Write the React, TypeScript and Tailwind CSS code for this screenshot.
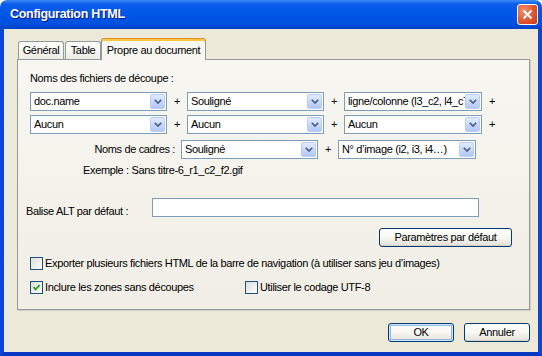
import React from "react";

const Chevron = () => (
  <svg width="8" height="5" viewBox="0 0 8 5" className="block">
    <path d="M0.8 0.8 L4 4 L7.2 0.8" fill="none" stroke="#4D6185" strokeWidth="1.7" />
  </svg>
);

const Combo: React.FC<{ value: string; className: string }> = ({ value, className }) => (
  <div className={`flex h-[19px] shrink-0 items-center border border-[#7F9DB9] bg-white ${className}`}>
    <span className="min-w-0 flex-1 overflow-hidden whitespace-nowrap pl-[3px] leading-[17px]">{value}</span>
    <div className="mr-px flex h-[15px] w-[15px] shrink-0 items-center justify-center rounded-[2px] border border-[#BACDF7] bg-gradient-to-b from-[#E2EBFE] to-[#B2C7F8]">
      <Chevron />
    </div>
  </div>
);

const Plus = () => <span className="w-[20px] shrink-0 text-center leading-[17px]">+</span>;

const Check: React.FC<{ checked?: boolean }> = ({ checked }) => (
  <div className="flex h-[13px] w-[13px] shrink-0 items-center justify-center border border-[#1C5180] bg-gradient-to-br from-[#DCDCD7] to-white">
    {checked && (
      <svg width="9" height="9" viewBox="0 0 9 9">
        <path d="M1.5 4.2 L3.6 6.4 L7.6 2" fill="none" stroke="#21A121" strokeWidth="1.8" />
      </svg>
    )}
  </div>
);

const XPButton: React.FC<{ children: React.ReactNode; className: string; def?: boolean }> = ({ children, className, def }) => (
  <div
    className={`flex h-[19px] items-center justify-center rounded-[3px] border border-[#003C74] bg-gradient-to-b from-white via-[#F8F7F2] to-[#E2E0D5] ${
      def ? "shadow-[inset_0_0_0_1px_#CEE7FF,inset_0_0_0_2px_#94B6EA]" : "shadow-[inset_0_-1px_0_#D6D0C5]"
    } ${className}`}
  >
    {children}
  </div>
);

export default function App() {
  return (
    <div className="flex h-[356px] w-[542px] flex-col bg-white font-['Liberation_Sans',Arial,sans-serif] text-[11px] tracking-[-0.35px] text-black">
      {/* title bar */}
      <div className="flex h-[29px] shrink-0 items-center justify-between rounded-t-[7px] bg-[linear-gradient(to_bottom,#3D8CF6_0%,#0A5DEA_14%,#0056E6_50%,#0051DF_82%,#0041C6_100%)] pl-[10px] pr-[4px]">
        <span className="text-[12.5px] font-bold tracking-[-0.3px] text-white [text-shadow:1px_1px_0_#0A1883]">Configuration HTML</span>
        <div className="flex h-[21px] w-[21px] items-center justify-center rounded-[3px] border border-white bg-[radial-gradient(circle_at_30%_30%,#F2906E_0%,#E0562F_55%,#C4391B_100%)]">
          <svg width="11" height="11" viewBox="0 0 11 11">
            <path d="M1.5 1.5 L9.5 9.5 M9.5 1.5 L1.5 9.5" stroke="white" strokeWidth="2" />
          </svg>
        </div>
      </div>

      {/* body */}
      <div className="flex flex-1 flex-col border-x-[4px] border-b-[4px] border-x-[#0A46D8] border-b-[#0838C4] bg-[#ECE9D8] pl-[13px] pr-[4px] pt-[9px]">
        {/* tabs */}
        <div className="flex h-[21px] items-end pl-px">
          <div className="flex h-[18px] w-[46px] items-center justify-center rounded-t-[3px] border border-b-0 border-[#919B9C] bg-gradient-to-b from-white to-[#ECEBE6]">Général</div>
          <div className="ml-px flex h-[18px] w-[36px] items-center justify-center rounded-t-[3px] border border-b-0 border-[#919B9C] bg-gradient-to-b from-white to-[#ECEBE6]">Table</div>
          <div className="relative z-10 -mb-px flex h-[22px] w-[105px] items-center justify-center rounded-t-[3px] border border-b-0 border-[#919B9C] border-t-[#E68B2C] bg-[#F7F6F1] pt-[2px] shadow-[inset_0_2px_0_#FFC73C]">
            Propre au document
          </div>
        </div>

        {/* panel */}
        <div className="flex h-[251px] w-[513px] flex-col border border-[#919B9C] bg-gradient-to-b from-[#F7F6F1] to-[#F0EEE5] pl-[12px] pt-[12px] shadow-[1px_1px_0_#D0CEC4]">
          <div className="h-[13px] leading-[13px]">Noms des fichiers de découpe :</div>

          <div className="mt-[7px] flex items-center">
            <Combo value="doc.name" className="w-[137px]" />
            <Plus />
            <Combo value="Souligné" className="w-[137px]" />
            <Plus />
            <Combo value="ligne/colonne (l3_c2, l4_c7" className="w-[138px]" />
            <Plus />
          </div>
          <div className="mt-[4px] flex items-center">
            <Combo value="Aucun" className="w-[137px]" />
            <Plus />
            <Combo value="Aucun" className="w-[137px]" />
            <Plus />
            <Combo value="Aucun" className="w-[138px]" />
            <Plus />
          </div>
          <div className="mt-[6px] flex items-center">
            <span className="w-[151px] pr-[6px] text-right">Noms de cadres :</span>
            <Combo value="Souligné" className="w-[137px]" />
            <Plus />
            <Combo value="N° d’image (i2, i3, i4…)" className="w-[138px]" />
          </div>

          <div className="mt-[5px] h-[13px] pl-[53px] leading-[13px]">Exemple : Sans titre-6_r1_c2_f2.gif</div>

          <div className="-ml-[4px] mt-[21px] flex items-end">
            <span className="w-[126px] leading-[11px]">Balise ALT par défaut :</span>
            <div className="h-[19px] w-[327px] border border-[#7F9DB9] bg-white" />
          </div>

          <div className="mr-[17px] mt-[11px] flex justify-end">
            <XPButton className="w-[133px]">Paramètres par défaut</XPButton>
          </div>

          <div className="mt-[10px] flex h-[13px] items-center gap-[2px]">
            <Check />
            <span className="leading-[13px]">Exporter plusieurs fichiers HTML de la barre de navigation (à utiliser sans jeu d’images)</span>
          </div>
          <div className="mt-[11px] flex h-[13px] items-center">
            <div className="flex w-[215px] items-center gap-[2px]">
              <Check checked />
              <span className="leading-[13px]">Inclure les zones sans découpes</span>
            </div>
            <div className="flex items-center gap-[2px]">
              <Check />
              <span className="leading-[13px]">Utiliser le codage UTF-8</span>
            </div>
          </div>
        </div>

        {/* buttons */}
        <div className="mt-[13px] flex w-[513px] justify-end gap-[10px]">
          <XPButton className="w-[66px]" def>
            OK
          </XPButton>
          <XPButton className="w-[66px]">Annuler</XPButton>
        </div>
      </div>
    </div>
  );
}
